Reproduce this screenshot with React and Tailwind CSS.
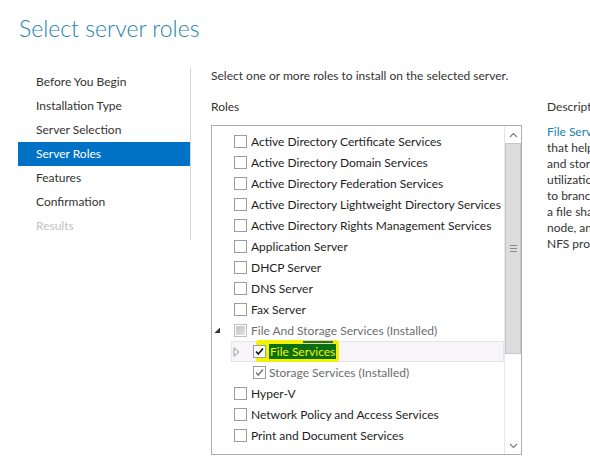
import React from "react";

const FONT = { fontFamily: '"Segoe UI", Lato, "Noto Sans", sans-serif' };

function Check({ color = "#000" }) {
  return (
    <svg width="11" height="11" viewBox="0 0 11 11" className="absolute left-[0px] top-[0px]">
      <path d="M2 5.5 L4.3 8 L9 2.5" fill="none" stroke={color} strokeWidth="1.6" />
    </svg>
  );
}

function Box({ kind }) {
  if (kind === "disabled") {
    return (
      <div className="w-[13px] h-[13px] border border-[#bdbdbd] bg-white flex items-center justify-center shrink-0">
        <div className="w-[9px] h-[9px] bg-gradient-to-br from-[#c4c4c4] to-[#e2e2e2]" />
      </div>
    );
  }
  return (
    <div className="relative w-[13px] h-[13px] border border-[#9c9c9c] bg-white shrink-0">
      {kind === "checked" && <Check color="#111" />}
      {kind === "grayChecked" && <Check color="#7a7a7a" />}
    </div>
  );
}

function Row({ label, kind, gray, expander }) {
  return (
    <div className="h-[21px] flex items-center">
      <div className="w-[22px] h-full flex items-center pl-[2px] shrink-0">
        {expander && (
          <svg width="7" height="7" viewBox="0 0 7 7">
            <path d="M6 0.5 L6 6 L0.5 6 Z" fill="#333" />
          </svg>
        )}
      </div>
      <Box kind={kind} />
      <span className={"ml-[4px] whitespace-nowrap " + (gray ? "text-[#6d6d6d]" : "text-[#1e1e1e]")}>{label}</span>
    </div>
  );
}

function ChildRow({ label, kind, gray, hover, highlight }) {
  return (
    <div className="h-[21px] flex items-stretch pl-[19px]">
      <div
        className={
          "flex-1 flex items-center border " +
          (hover ? "bg-[#f7f5f9] border-[#e6e3ea]" : "border-transparent")
        }
      >
        <div className="w-[21px] pl-[1px] flex items-center shrink-0">
          {hover && (
            <svg width="7" height="10" viewBox="0 0 7 10">
              <path d="M1 0.8 L6 5 L1 9.2 Z" fill="none" stroke="#9a9a9a" strokeWidth="1" />
            </svg>
          )}
        </div>
        {highlight ? (
          <div className="relative flex items-center">
            <div className="absolute left-[3px] top-[-4px] w-[83px] h-[22px] bg-[#f2f200] rounded-[3px]" />
            <div className="absolute left-[50px] top-[-3px] w-[30px] h-[2px] bg-[#1560c0]" />
            <div className="relative">
              <Box kind={kind} />
            </div>
            <span className="relative ml-[3px] px-[1px] bg-[#0a6e12] text-[#f4f400] leading-[15px] whitespace-nowrap">{label}</span>
          </div>
        ) : (
          <>
            <Box kind={kind} />
            <span className={"ml-[3px] whitespace-nowrap " + (gray ? "text-[#6d6d6d]" : "text-[#1e1e1e]")}>{label}</span>
          </>
        )}
      </div>
    </div>
  );
}

export default function App() {
  const nav = [
    "Before You Begin",
    "Installation Type",
    "Server Selection",
    "Server Roles",
    "Features",
    "Confirmation",
    "Results",
  ];
  return (
    <div className="w-[590px] h-[460px] bg-white overflow-hidden text-[12px] text-[#1e1e1e]" style={FONT}>
      <div className="h-[68px] pl-[19px] pt-[12px]">
        <div className="text-[23px] leading-[32px] font-light text-[#1f82ad] whitespace-nowrap">Select server roles</div>
      </div>
      <div className="flex">
        <div className="w-[172px] ml-[18px] pt-[2px] shrink-0">
          {nav.map((n) => (
            <div
              key={n}
              className={
                "h-[24px] flex items-center pl-[18px] whitespace-nowrap " +
                (n === "Server Roles"
                  ? "bg-[#0072c6] text-white"
                  : n === "Results"
                  ? "text-[#c2c2c2]"
                  : "text-[#333]")
              }
            >
              {n}
            </div>
          ))}
        </div>
        <div className="w-px h-[172px] bg-[#d6d6d6] shrink-0" />
        <div className="pl-[20px] shrink-0">
          <div className="leading-[16px] text-[#333] whitespace-nowrap">Select one or more roles to install on the selected server.</div>
          <div className="flex mt-[15px]">
            <div className="w-[311px] shrink-0">
              <div className="leading-[16px] text-[#333]">Roles</div>
              <div className="mt-[10px] h-[330px] border border-[#acacac] flex">
                <div className="flex-1 pt-[5px]">
                  <Row label="Active Directory Certificate Services" />
                  <Row label="Active Directory Domain Services" />
                  <Row label="Active Directory Federation Services" />
                  <Row label="Active Directory Lightweight Directory Services" />
                  <Row label="Active Directory Rights Management Services" />
                  <Row label="Application Server" />
                  <Row label="DHCP Server" />
                  <Row label="DNS Server" />
                  <Row label="Fax Server" />
                  <Row label="File And Storage Services (Installed)" kind="disabled" gray expander />
                  <ChildRow label="File Services" kind="checked" hover highlight />
                  <ChildRow label="Storage Services (Installed)" kind="grayChecked" gray />
                  <Row label="Hyper-V" />
                  <Row label="Network Policy and Access Services" />
                  <Row label="Print and Document Services" />
                </div>
                <div className="w-[17px] shrink-0 flex flex-col border-l border-[#e8e8e8]">
                  <div className="h-[17px] flex items-center justify-center">
                    <svg width="9" height="6" viewBox="0 0 9 6">
                      <path d="M1 5 L4.5 1.5 L8 5" fill="none" stroke="#7a7a7a" strokeWidth="1.1" />
                    </svg>
                  </div>
                  <div className="h-[211px] bg-[#dcdcdc] border border-[#c6c6c6] flex items-center justify-center">
                    <div className="flex flex-col gap-[2px]">
                      <div className="w-[7px] h-px bg-[#8a8a8a]" />
                      <div className="w-[7px] h-px bg-[#8a8a8a]" />
                      <div className="w-[7px] h-px bg-[#8a8a8a]" />
                    </div>
                  </div>
                  <div className="flex-1" />
                  <div className="h-[17px] flex items-center justify-center">
                    <svg width="9" height="6" viewBox="0 0 9 6">
                      <path d="M1 1 L4.5 4.5 L8 1" fill="none" stroke="#7a7a7a" strokeWidth="1.1" />
                    </svg>
                  </div>
                </div>
              </div>
            </div>
            <div className="ml-[25px] whitespace-nowrap text-[#333]">
              <div className="leading-[16px]">Description</div>
              <div className="mt-[9px] leading-[16px]">
                <div><span className="text-[#1a7fb5]">File Server Resource Manager</span> provides tools</div>
                <div>that help you manage and monitor</div>
                <div>and storage, reduce disk space</div>
                <div>utilization, replicate and cache files</div>
                <div>to branch offices, move or fail over</div>
                <div>a file share to another cluster</div>
                <div>node, and share files by using the</div>
                <div>NFS protocol.</div>
              </div>
            </div>
          </div>
        </div>
      </div>
    </div>
  );
}
